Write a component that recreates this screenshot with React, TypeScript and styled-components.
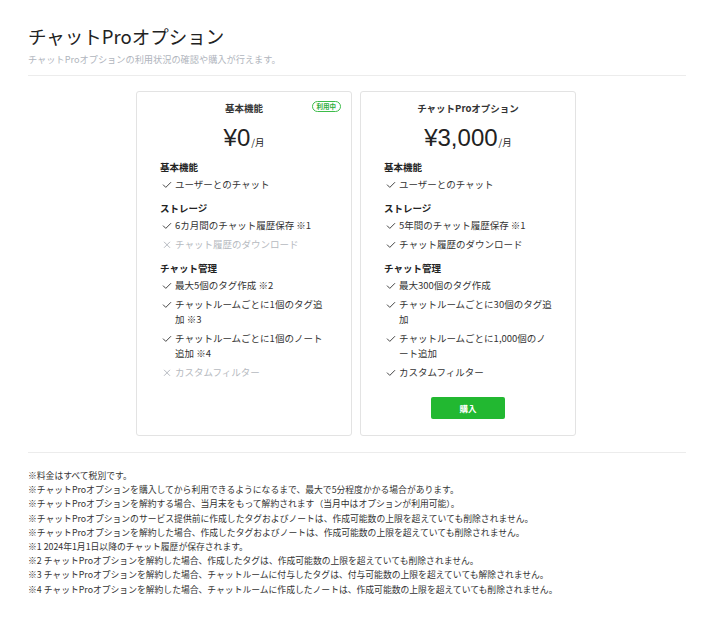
import React from "react";
import styled, { createGlobalStyle } from "styled-components";

const Global = createGlobalStyle`
  html, body { margin: 0; padding: 0; background: #fff; }
  body { font-family: "Noto Sans CJK JP", "Noto Sans", sans-serif; color: #333; }
  * { box-sizing: border-box; }
`;

const Page = styled.div`
  padding: 23px 22px 30px 28px;
`;

const Title = styled.h1`
  margin: 0;
  font-size: 18.5px;
  font-weight: 400;
  line-height: 26px;
  color: #222;
`;

const Subtitle = styled.p`
  margin: 4px 0 0;
  font-size: 9.2px;
  line-height: 13px;
  color: #b0b5bd;
`;

const Divider = styled.hr<{ $top: number; $bottom: number }>`
  margin: ${(p) => `${p.$top}px 0 ${p.$bottom}px`};
  border: 0;
  border-top: 1px solid #ececec;
`;

const Plans = styled.div`
  display: flex;
  justify-content: center;
  gap: 8px;
  padding-right: 2px;
`;

const Card = styled.div`
  position: relative;
  width: 216px;
  height: 345px;
  border: 1px solid #e3e3e3;
  border-radius: 3px;
  padding: 9px 23px 0;
`;

const CardTitle = styled.div`
  text-align: center;
  font-size: 9.5px;
  font-weight: 700;
  line-height: 14px;
  color: #333;
`;

const Badge = styled.span`
  position: absolute;
  top: 9px;
  right: 10px;
  height: 11px;
  padding: 0 4px;
  border: 1px solid #3dbc4a;
  border-radius: 6px;
  font-size: 6.5px;
  font-weight: 700;
  line-height: 9px;
  color: #2fae3c;
`;

const Price = styled.div`
  display: flex;
  justify-content: center;
  align-items: baseline;
  margin-top: 6px;
  color: #222;
  height: 34px;
`;

const Amount = styled.span`
  font-family: "Liberation Sans", Arial, sans-serif;
  font-size: 24px;
  line-height: 34px;
  font-weight: 400;
`;

const Unit = styled.span`
  font-size: 9.5px;
  margin-left: 1px;
`;

const Section = styled.div<{ $first?: boolean }>`
  margin-top: ${(p) => (p.$first ? "5px" : "7px")};
`;

const SectionTitle = styled.div`
  font-size: 9.5px;
  font-weight: 700;
  line-height: 14px;
  color: #222;
  margin-bottom: 1px;
`;

const Item = styled.div<{ $off?: boolean }>`
  display: flex;
  gap: 3px;
  padding: 2px 0 2px 2px;
  font-size: 9.5px;
  line-height: 15px;
  color: ${(p) => (p.$off ? "#b6bac0" : "#333")};
`;

const Mark = styled.span`
  flex: none;
  width: 10px;
  display: inline-flex;
  align-items: flex-start;
  padding-top: 4px;
`;

const BuyRow = styled.div`
  display: flex;
  justify-content: center;
  margin-top: 15px;
`;

const BuyButton = styled.button`
  width: 74px;
  height: 22px;
  border: 0;
  border-radius: 2px;
  background: #22b831;
  color: #fff;
  font-family: inherit;
  font-size: 8.5px;
  font-weight: 700;
`;

const Notes = styled.div`
  font-size: 8.8px;
  line-height: 14.2px;
  color: #333;
`;

const Check = () => (
  <svg width="10" height="8" viewBox="0 0 10 8">
    <path d="M1 3.6 L3.8 6.4 L9 1.2" fill="none" stroke="#444" strokeWidth="1" />
  </svg>
);

const Cross = () => (
  <svg width="10" height="8" viewBox="0 0 10 8">
    <path d="M2 0.8 L8 6.8 M8 0.8 L2 6.8" fill="none" stroke="#b6bac0" strokeWidth="1" />
  </svg>
);

type Feature = { text: string; note?: string; off?: boolean };
type Plan = {
  name: string;
  price: string;
  current?: boolean;
  buy?: boolean;
  sections: { title: string; items: Feature[] }[];
};

const plans: Plan[] = [
  {
    name: "基本機能",
    price: "¥0",
    current: true,
    sections: [
      { title: "基本機能", items: [{ text: "ユーザーとのチャット" }] },
      {
        title: "ストレージ",
        items: [
          { text: "6カ月間のチャット履歴保存", note: "※1" },
          { text: "チャット履歴のダウンロード", off: true },
        ],
      },
      {
        title: "チャット管理",
        items: [
          { text: "最大5個のタグ作成", note: "※2" },
          { text: "チャットルームごとに1個のタグ追加", note: "※3" },
          { text: "チャットルームごとに1個のノート追加", note: "※4" },
          { text: "カスタムフィルター", off: true },
        ],
      },
    ],
  },
  {
    name: "チャットProオプション",
    price: "¥3,000",
    buy: true,
    sections: [
      { title: "基本機能", items: [{ text: "ユーザーとのチャット" }] },
      {
        title: "ストレージ",
        items: [
          { text: "5年間のチャット履歴保存", note: "※1" },
          { text: "チャット履歴のダウンロード" },
        ],
      },
      {
        title: "チャット管理",
        items: [
          { text: "最大300個のタグ作成" },
          { text: "チャットルームごとに30個のタグ追加" },
          { text: "チャットルームごとに1,000個のノート追加" },
          { text: "カスタムフィルター" },
        ],
      },
    ],
  },
];

const notes = [
  "※料金はすべて税別です。",
  "※チャットProオプションを購入してから利用できるようになるまで、最大で5分程度かかる場合があります。",
  "※チャットProオプションを解約する場合、当月末をもって解約されます（当月中はオプションが利用可能）。",
  "※チャットProオプションのサービス提供前に作成したタグおよびノートは、作成可能数の上限を超えていても削除されません。",
  "※チャットProオプションを解約した場合、作成したタグおよびノートは、作成可能数の上限を超えていても削除されません。",
  "※1 2024年1月1日以降のチャット履歴が保存されます。",
  "※2 チャットProオプションを解約した場合、作成したタグは、作成可能数の上限を超えていても削除されません。",
  "※3 チャットProオプションを解約した場合、チャットルームに付与したタグは、付与可能数の上限を超えていても解除されません。",
  "※4 チャットProオプションを解約した場合、チャットルームに作成したノートは、作成可能数の上限を超えていても削除されません。",
];

export default function App() {
  return (
    <Page>
      <Global />
      <Title>チャットProオプション</Title>
      <Subtitle>チャットProオプションの利用状況の確認や購入が行えます。</Subtitle>
      <Divider $top={9} $bottom={15} />
      <Plans>
        {plans.map((plan) => (
          <Card key={plan.name}>
            <CardTitle>{plan.name}</CardTitle>
            {plan.current && <Badge>利用中</Badge>}
            <Price>
              <Amount>{plan.price}</Amount>
              <Unit>/月</Unit>
            </Price>
            {plan.sections.map((s, i) => (
              <Section key={s.title} $first={i === 0}>
                <SectionTitle>{s.title}</SectionTitle>
                {s.items.map((it) => (
                  <Item key={it.text} $off={it.off}>
                    <Mark>{it.off ? <Cross /> : <Check />}</Mark>
                    <span>{it.note ? `${it.text} ${it.note}` : it.text}</span>
                  </Item>
                ))}
              </Section>
            ))}
            {plan.buy && (
              <BuyRow>
                <BuyButton>購入</BuyButton>
              </BuyRow>
            )}
          </Card>
        ))}
      </Plans>
      <Divider $top={16} $bottom={16} />
      <Notes>
        {notes.map((n) => (
          <div key={n}>{n}</div>
        ))}
      </Notes>
    </Page>
  );
}
